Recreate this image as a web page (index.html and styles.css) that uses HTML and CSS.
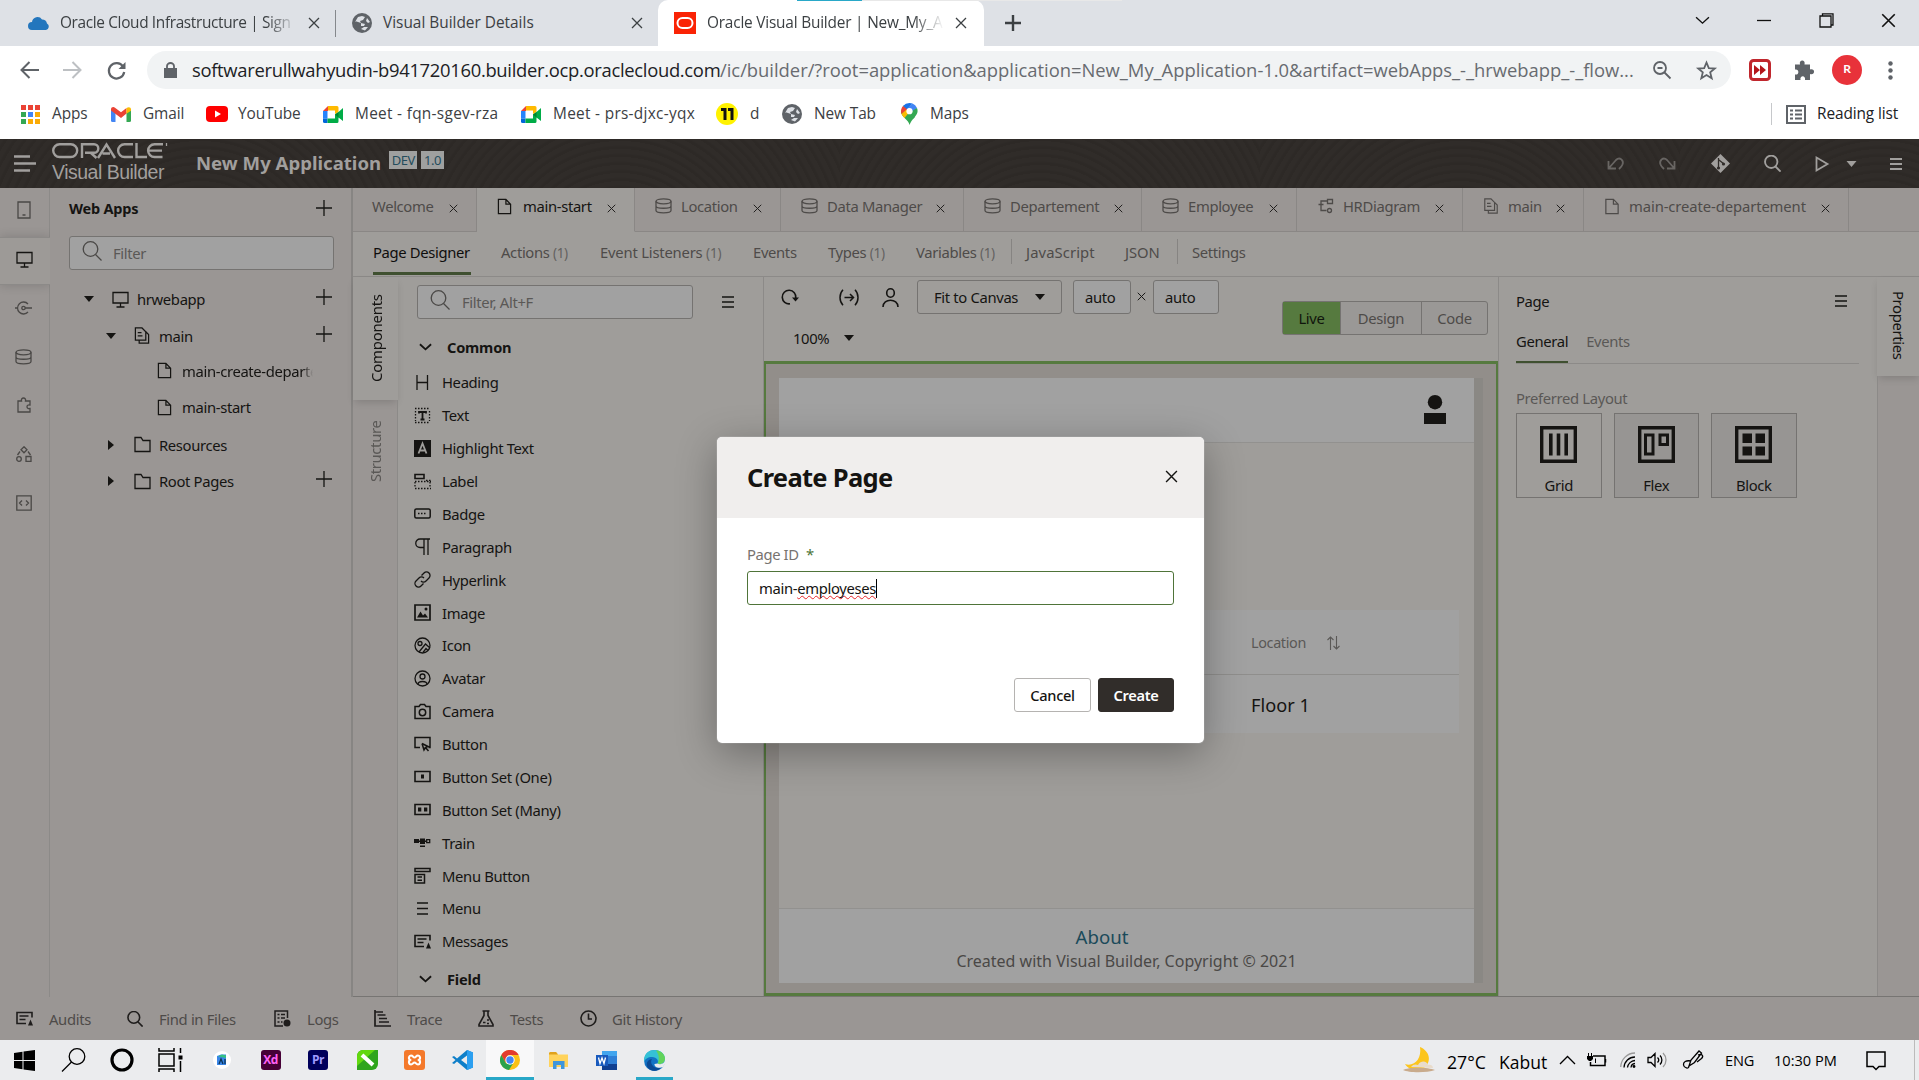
FILE: index.html
```html
<!DOCTYPE html>
<html lang="en">
<head>
<meta charset="utf-8">
<title>Oracle Visual Builder | New_My_Application</title>
<link rel="stylesheet" href="styles.css">
</head>
<body>
<svg class="sprite" xmlns="http://www.w3.org/2000/svg">
  <symbol id="x" viewBox="0 0 12 12"><path d="M1 1l10 10M11 1L1 11"/></symbol>
  <symbol id="plus" viewBox="0 0 16 16"><path d="M8 0v16M0 8h16"/></symbol>
  <symbol id="tri" viewBox="0 0 10 6"><path d="M0 0h10L5 6z" fill="currentColor" stroke="none"/></symbol>
  <symbol id="trir" viewBox="0 0 6 10"><path d="M0 0v10l6-5z" fill="currentColor" stroke="none"/></symbol>
  <symbol id="chev" viewBox="0 0 14 8"><path d="M1 1l6 5.5L13 1"/></symbol>
  <symbol id="mag" viewBox="0 0 20 20"><circle cx="8.5" cy="8" r="7.3"/><path d="M13.5 13.5l6 6"/></symbol>
  <symbol id="ham" viewBox="0 0 12 12"><path d="M0 1h12M0 6h12M0 11h12"/></symbol>
  <symbol id="globe" viewBox="0 0 20 20"><circle cx="10" cy="10" r="10" fill="#5f6368" stroke="none"/><path d="M3 9l3-5 4-1 3 1-2 3-3 1 1 2 4 1-1 2-3 0 0-3-6-2zM15 5l3 4-2 1-2-2zM9 16l3-2 4 0-3 3.500z" fill="#dee1e6" stroke="none"/></symbol>
  <symbol id="file" viewBox="0 0 16 18"><path d="M1.500 1.500h8l5 5v10h-13zM9.500 1.500v5h5"/></symbol>
  <symbol id="files" viewBox="0 0 16 18"><path d="M1 1h7l4 4v9H1zM12 5l3 3v9H5v-3M3.500 6h4M3.500 9.500h5"/></symbol>
  <symbol id="folder" viewBox="0 0 17 17"><path d="M1 1.500h6l2 3h7V15.500H1z"/></symbol>
  <symbol id="db" viewBox="0 0 17 16"><ellipse cx="8.500" cy="3.300" rx="7.500" ry="2.500"/><path d="M1 3.300v9.300c0 3 15 3 15 0V3.300M1 8c0 3 15 3 15 0"/></symbol>
  <symbol id="mon" viewBox="0 0 17 17"><path d="M1 1.500h15v10.500H1zM8.500 12v3.500M4.500 16h8"/></symbol>
  <symbol id="diag" viewBox="0 0 16 16"><path d="M10 1.500h5v4h-5zM10 3H3.500v9.500H9M1 6.500h5"/><circle cx="12" cy="12.500" r="2"/></symbol>
  <symbol id="phone" viewBox="0 0 14 18"><path d="M1 1h12v16H1zM5.500 14h3"/></symbol>
  <symbol id="svc" viewBox="0 0 17 14"><circle cx="8.500" cy="7" r="1.700"/><path d="M13 3a6 6 0 1 0 0 8M10 7h7M0 7h2.500"/></symbol>
  <symbol id="puz" viewBox="0 0 14 16"><path d="M1 4h3.500c-1-4 5-4 4 0H13v4c-4-1-4 4.500 0 3.500V15H1z"/></symbol>
  <symbol id="proc" viewBox="0 0 16 16"><path d="M8 0.800l3 3-3 3-3-3zM10 10.500h5v5h-5zM4 5.500L1.500 9M12 5.500L14.500 9"/><circle cx="3" cy="13" r="2.300"/></symbol>
  <symbol id="code" viewBox="0 0 16 16"><path d="M.8.800h14.400v14.400H.8zM6 5.500L3.500 8 6 10.500M10 5.500L12.500 8 10 10.500"/></symbol>
  <symbol id="cloud" viewBox="0 0 22 14"><path d="M4 14a4 4 0 0 1 0-8 5.500 5.500 0 0 1 10-2.500A5 5 0 0 1 19 7.500 3.500 3.500 0 0 1 18 14z" fill="#2376bd" stroke="none"/></symbol>
  <symbol id="meet" viewBox="0 0 20 17"><g stroke="none"><path d="M5 0v5H0z" fill="#ea4335"/><path d="M5 0h9a1.500 1.500 0 0 1 1.500 1.500V6L12 8V4.500H5z" fill="#ffba00"/><path d="M0 5h4.500v7.500H0z" fill="#2684fc"/><path d="M0 12.500h4.500V17H1.500A1.500 1.500 0 0 1 0 15.500z" fill="#0066da"/><path d="M4.500 12.500H12V8.500L15.500 6 20 2v13l-4.500-3.500v4A1.500 1.500 0 0 1 14 17H4.500z" fill="#00ac47"/><path d="M12 8.500L15.500 6v5.500z" fill="#00832d"/></g></symbol>
  <symbol id="msg" viewBox="0 0 17 14"><path d="M16 6V1H1v11h9M3.500 4.500h9M3.500 8h6"/><path d="M14.500 8l2.500 6h-5z" fill="currentColor" stroke="none"/></symbol>
</svg>

<header class="chrome">
  <div class="tabstrip">
    <div class="btab t1"><svg class="i" width="22" height="14"><use href="#cloud"/></svg><span class="fade">Oracle Cloud Infrastructure | Sign</span><svg class="i bx" width="12" height="12"><use href="#x"/></svg></div>
    <div class="btab t2"><svg class="i" width="20" height="20"><use href="#globe"/></svg><span>Visual Builder Details</span><svg class="i bx" width="12" height="12"><use href="#x"/></svg></div>
    <div class="btab t3"><svg class="i" width="22" height="22" viewBox="0 0 22 22"><path d="M0 0h22v22H0z" fill="#fa2305" stroke="none"/><rect x="3.500" y="6" width="15" height="10" rx="5" stroke="#fff" stroke-width="2"/></svg><span class="fade f3">Oracle Visual Builder | New_My_A</span><svg class="i bx" width="12" height="12"><use href="#x"/></svg></div>
    <svg class="i newtab" width="16" height="16"><use href="#plus"/></svg>
    <div class="win">
      <svg class="i" width="15" height="9" viewBox="0 0 14 8"><use href="#chev"/></svg>
      <svg class="i" width="14" height="14" viewBox="0 0 14 14"><path d="M0 7.500h14"/></svg>
      <svg class="i" width="15" height="15" viewBox="0 0 15 15"><path d="M1 3h11v11H1zM3.500 3V.8H14V12h-2"/></svg>
      <svg class="i" width="15" height="15"><use href="#x"/></svg>
    </div>
    <div class="loader"></div>
  </div>
  <div class="toolbar">
    <svg class="i" width="19" height="18" viewBox="0 0 19 18"><path d="M19 9H2M9.500 1L1.500 9l8 8" stroke="#5f6368" stroke-width="2"/></svg>
    <svg class="i" width="19" height="18" viewBox="0 0 19 18"><path d="M0 9h17M9.500 1l8 8-8 8" stroke="#bdc0c3" stroke-width="2"/></svg>
    <svg class="i" width="19" height="19" viewBox="0 0 19 19"><path d="M16 5.500A7.700 7.700 0 1 0 17.200 11" stroke="#5f6368" stroke-width="2.200"/><path d="M18.500 1v7h-7z" fill="#5f6368" stroke="none"/></svg>
    <div class="omni">
      <svg class="i" width="13" height="16" viewBox="0 0 13 16"><path d="M0 6h13v10H0z" fill="#5f6368" stroke="none"/><path d="M3 6V4a3.500 3 0 0 1 7 0v2" stroke="#5f6368" stroke-width="1.800"/></svg>
      <span class="url"><b>softwarerullwahyudin-b941720160.builder.ocp.oraclecloud.com</b><i>/ic/builder/?root=application&amp;application=New_My_Application-1.0&amp;artifact=webApps_-_hrwebapp_-_flow...</i></span>
      <svg class="i" width="18" height="18" viewBox="0 0 18 18"><g stroke="#5f6368" stroke-width="1.800"><circle cx="7" cy="7" r="6"/><path d="M11.500 11.500l6 6M4.500 7h5"/></g></svg>
      <svg class="i star" width="19" height="19" viewBox="0 0 19 19"><path d="M9.500 1.500l2.300 5.600 6 .4-4.600 3.900 1.500 5.900-5.200-3.200-5.200 3.200 1.500-5.900L1.200 7.500l6-.4z" stroke="#5f6368" stroke-width="1.800"/></svg>
    </div>
    <svg class="i" width="22" height="22" viewBox="0 0 22 22"><rect x="1.500" y="1.500" width="19" height="19" rx="3" fill="#fff" stroke="#c0272d" stroke-width="3"/><path d="M5 6l6 5-6 5zM11 6l6 5-6 5z" fill="#b3161b" stroke="none"/></svg>
    <svg class="i" width="20" height="20" viewBox="0 0 20 20"><path d="M1 4.500h5c-1.500-5.500 6-5.500 4.500 0H16v5c5.500-1.500 5.500 6 0 4.500V20h-5c1-5-5.500-5-4.500 0H1v-5.500c4.500 1 4.500-6 0-5z" fill="#5f6368" stroke="none"/></svg>
    <div class="me">R</div>
    <svg class="i" width="5" height="19" viewBox="0 0 5 19"><g fill="#5f6368" stroke="none"><circle cx="2.500" cy="2.500" r="2.200"/><circle cx="2.500" cy="9.500" r="2.200"/><circle cx="2.500" cy="16.500" r="2.200"/></g></svg>
  </div>
  <div class="marks">
    <div><svg class="i" width="19" height="19" viewBox="0 0 19 19"><g stroke="none"><path d="M0 0h5v5H0zM7 0h5v5H7zM14 0h5v5h-5z" fill="#ea4335"/><path d="M0 7h5v5H0zM0 14h5v5H0z" fill="#34a853"/><path d="M7 7h5v5H7z" fill="#4285f4"/><path d="M14 7h5v5h-5zM7 14h5v5H7zM14 14h5v5h-5z" fill="#fbab05"/></g></svg>Apps</div>
    <div><svg class="i" width="20" height="15" viewBox="0 0 20 15"><g stroke="none"><path d="M0 2l4.500 3.500V15H1.500A1.500 1.500 0 0 1 0 13.500z" fill="#4285f4"/><path d="M20 2l-4.500 3.500V15h3a1.500 1.500 0 0 0 1.500-1.500z" fill="#34a853"/><path d="M0 2.500C0 0 2.500-.5 4 .7l6 4.600 5.500-4.200v5.400L10 11 0 3.500z" fill="#ea4335"/><path d="M15.500 1.100C17.500-.6 20 0 20 2.500v1.200l-4.500 3z" fill="#fbbc04"/></g></svg>Gmail</div>
    <div><svg class="i" width="22" height="16" viewBox="0 0 22 16"><rect width="22" height="16" rx="4" fill="#f00" stroke="none"/><path d="M9 4.500v7l6-3.500z" fill="#fff" stroke="none"/></svg>YouTube</div>
    <div><svg class="i" width="20" height="17"><use href="#meet"/></svg>Meet - fqn-sgev-rza</div>
    <div><svg class="i" width="20" height="17"><use href="#meet"/></svg>Meet - prs-djxc-yqx</div>
    <div><svg class="i" width="22" height="22" viewBox="0 0 22 22"><circle cx="11" cy="11" r="11" fill="#fff200" stroke="none"/><path d="M5 6.500h4V17M12 6.500h4V17" stroke="#111" stroke-width="3"/></svg>d</div>
    <div><svg class="i" width="20" height="20"><use href="#globe"/></svg>New Tab</div>
    <div><svg class="i" width="17" height="22" viewBox="0 0 17 22"><g stroke="none"><path d="M8.500 22C8 17 0 14 0 8.500L3 2l11 12c-3 3-4.500 5-5.500 8z" fill="#34a853"/><path d="M8.500 0A8.500 8.500 0 0 0 2 3l4 4 5.500-6.500z" fill="#1a73e8"/><path d="M2 3A8.500 8.500 0 0 0 .5 11L7 7z" fill="#ea4335"/><path d="M.5 11c.6 1.500 2 3 3 4l7-8.500L5 7z" fill="#fbbc04"/><path d="M11.500.5A8.500 8.500 0 0 1 16 5l-5 6-4-6z" fill="#4285f4"/><path d="M16 5c2 5-1.500 8-4 11l-4-4 3-4z" fill="#34a853"/><circle cx="8.500" cy="8.200" r="3.100" fill="#fff"/></g></svg>Maps</div>
    <div class="reading"><svg class="i" width="20" height="19" viewBox="0 0 20 19"><path d="M1 1h18v17H1zM4 5.500h3M4 9.500h3M4 13.500h3M9 5.500h7M9 9.500h7M9 13.500h7" stroke="#5f6368" stroke-width="2"/></svg>Reading list</div>
  </div>
</header>

<div class="app">
  <header class="apphead">
    <svg class="i menu" width="22" height="17" viewBox="0 0 22 17"><path d="M0 1.500h16M0 8.500h22M0 15.500h16" stroke-width="2.400"/></svg>
    <div class="brand">
      <svg class="i" width="116" height="17" viewBox="0 0 116 17"><title>ORACLE</title><g stroke-width="2.400"><rect x="1.200" y="2.200" width="24" height="12.800" rx="6.400"/><path d="M30 16V2.200h12a4.300 4.300 0 0 1 0 8.600h-9M39 11l5.500 5M46 16l8.500-13.500L63 16M50.500 11.500H58M81 2.200h-8.500a6.400 6.400 0 0 0 0 12.800H81M84.500 1v14H95M111 2.200h-8.500a6.400 6.400 0 0 0 0 12.800h8M96.500 8.600H110"/></g><path d="M114.500 1v3"/></svg>
      <div>Visual Builder</div>
    </div>
    <h1>New My Application</h1><span class="tag">DEV</span><span class="tag">1.0</span>
    <div class="headtools">
      <svg class="i dim" width="17" height="13" viewBox="0 0 17 13"><path d="M1.500 4v7.500h7.500M2 11L9 3c4-4 8 1 6.500 4.500C15 9 13 11 12 12" stroke-width="1.800"/></svg>
      <svg class="i dim" width="17" height="13" viewBox="0 0 17 13"><path d="M15.500 4v7.500H8M15 11L8 3C4-1 0 4 1.500 7.500 2 9 4 11 5 12" stroke-width="1.800"/></svg>
      <svg class="i" width="19" height="19" viewBox="0 0 19 19"><path d="M9.500 0l9.500 9.500-9.500 9.500L0 9.500z" fill="currentColor" stroke="none"/><path d="M7.500 4v11M8 6l5 4" stroke="#302c29"/><circle cx="7.500" cy="14" r="1.600" fill="#302c29" stroke="none"/><circle cx="12.500" cy="10" r="1.600" fill="#302c29" stroke="none"/></svg>
      <svg class="i" width="17" height="17" viewBox="0 0 20 20" stroke-width="2.200"><use href="#mag"/></svg>
      <svg class="i" width="14" height="16" viewBox="0 0 14 16"><path d="M1.500 1.500v13L12.500 8z" stroke-width="1.800"/></svg>
      <svg class="i" width="11" height="6"><use href="#tri"/></svg>
      <svg class="i" width="12" height="12" stroke-width="1.800"><use href="#ham"/></svg>
    </div>
  </header>

  <div class="body">
    <nav class="rail">
      <div><svg class="i" width="14" height="18"><use href="#phone"/></svg></div>
      <div class="on"><svg class="i" width="17" height="17"><use href="#mon"/></svg></div>
      <div><svg class="i" width="17" height="14"><use href="#svc"/></svg></div>
      <div><svg class="i" width="17" height="16"><use href="#db"/></svg></div>
      <div><svg class="i" width="14" height="16"><use href="#puz"/></svg></div>
      <div><svg class="i" width="16" height="16"><use href="#proc"/></svg></div>
      <div><svg class="i" width="16" height="16"><use href="#code"/></svg></div>
    </nav>

    <aside class="nav">
      <div class="navhead"><b>Web Apps</b><svg class="i" width="16" height="16"><use href="#plus"/></svg></div>
      <div class="search"><svg class="i" width="20" height="20"><use href="#mag"/></svg>Filter</div>
      <div class="tree">
        <div class="row r0"><svg class="i c" width="10" height="6"><use href="#tri"/></svg><svg class="i ic" width="17" height="17"><use href="#mon"/></svg><span>hrwebapp</span><svg class="i p" width="16" height="16"><use href="#plus"/></svg></div>
        <div class="row r1"><svg class="i c" width="10" height="6"><use href="#tri"/></svg><svg class="i ic" width="16" height="17"><use href="#files"/></svg><span>main</span><svg class="i p" width="16" height="16"><use href="#plus"/></svg></div>
        <div class="row r2"><svg class="i ic" width="15" height="17"><use href="#file"/></svg><span class="cut">main-create-departement</span></div>
        <div class="row r2"><svg class="i ic" width="15" height="17"><use href="#file"/></svg><span>main-start</span></div>
        <div class="row r1"><svg class="i c" width="6" height="10"><use href="#trir"/></svg><svg class="i ic" width="17" height="17"><use href="#folder"/></svg><span>Resources</span></div>
        <div class="row r1"><svg class="i c" width="6" height="10"><use href="#trir"/></svg><svg class="i ic" width="17" height="17"><use href="#folder"/></svg><span>Root Pages</span><svg class="i p" width="16" height="16"><use href="#plus"/></svg></div>
      </div>
    </aside>

    <main class="work">
      <div class="tabs">
        <div><span>Welcome</span><svg class="i" width="9" height="9"><use href="#x"/></svg></div>
        <div class="on"><svg class="i" width="15" height="17"><use href="#file"/></svg><span>main-start</span><svg class="i" width="9" height="9"><use href="#x"/></svg></div>
        <div><svg class="i" width="17" height="16"><use href="#db"/></svg><span>Location</span><svg class="i" width="9" height="9"><use href="#x"/></svg></div>
        <div><svg class="i" width="17" height="16"><use href="#db"/></svg><span>Data Manager</span><svg class="i" width="9" height="9"><use href="#x"/></svg></div>
        <div><svg class="i" width="17" height="16"><use href="#db"/></svg><span>Departement</span><svg class="i" width="9" height="9"><use href="#x"/></svg></div>
        <div><svg class="i" width="17" height="16"><use href="#db"/></svg><span>Employee</span><svg class="i" width="9" height="9"><use href="#x"/></svg></div>
        <div><svg class="i" width="17" height="16"><use href="#diag"/></svg><span>HRDiagram</span><svg class="i" width="9" height="9"><use href="#x"/></svg></div>
        <div><svg class="i" width="16" height="16"><use href="#files"/></svg><span>main</span><svg class="i" width="9" height="9"><use href="#x"/></svg></div>
        <div class="wide"><svg class="i" width="16" height="17"><use href="#file"/></svg><span>main-create-departement</span><svg class="i" width="9" height="9"><use href="#x"/></svg></div>
        <div class="rest"></div>
      </div>
      <div class="subtabs">
        <span class="on">Page Designer</span><span>Actions <small>(1)</small></span><span>Event Listeners <small>(1)</small></span><span>Events</span><span>Types <small>(1)</small></span><span>Variables <small>(1)</small></span><span class="sep">JavaScript</span><span>JSON</span><span class="sep">Settings</span>
      </div>
      <div class="designer">
        <div class="side"><div class="on">Components</div><div>Structure</div></div>
        <section class="palette">
          <div class="pfilter"><div class="search"><svg class="i" width="20" height="20"><use href="#mag"/></svg>Filter, Alt+F</div><svg class="i" width="12" height="12"><use href="#ham"/></svg></div>
          <h3><svg class="i" width="13" height="8" stroke-width="2"><use href="#chev"/></svg>Common</h3>
          <ul>
            <li><svg class="i" width="17" height="17" viewBox="0 0 17 17"><path d="M3 1v15M13.500 1v15M3 8.500h10.500"/></svg>Heading</li>
            <li><svg class="i" width="17" height="17" viewBox="0 0 17 17"><path d="M1 1.500h15M1 15.500h15M1.500 4v10M15.500 4v10" stroke-dasharray="1.500 1.500"/><path d="M5 6.500V5h7v1.500M8.500 5v7.500M6.500 12.500h4" stroke-width="1.800"/></svg>Text</li>
            <li><svg class="i" width="17" height="17" viewBox="0 0 17 17"><path d="M0 0h17v17H0z" fill="currentColor" stroke="none"/><path d="M4.500 13.500l4-10 4 10M6 10.500h5" stroke="#9f9d9a" stroke-width="1.800"/></svg>Highlight Text</li>
            <li><svg class="i" width="17" height="17" viewBox="0 0 17 17"><path d="M1 1.500h9v4H1z" stroke-width="1.600"/><path d="M12 7.500h5M1 8.500h16M1 15.500h16M1 9v6M16 9v6" stroke-dasharray="1.500 1.500"/></svg>Label</li>
            <li><svg class="i" width="17" height="17" viewBox="0 0 17 17"><rect x=".8" y="4" width="15.400" height="9" rx="1.500" stroke-width="1.500"/><path d="M4 8.500h9" stroke-dasharray="1.500 1.500"/></svg>Badge</li>
            <li><svg class="i" width="17" height="17" viewBox="0 0 17 17"><path d="M16 1H6a4 4 0 0 0 0 8.500h4V17M10 1v8M14 1v16"/></svg>Paragraph</li>
            <li><svg class="i" width="17" height="17" viewBox="0 0 17 17"><path d="M7.500 4.500l2.500-2.500a3.500 3.500 0 0 1 5 5l-3 3a3.500 3.500 0 0 1-5 0M9.500 12.500L7 15a3.500 3.500 0 0 1-5-5l3-3a3.500 3.500 0 0 1 5 0"/></svg>Hyperlink</li>
            <li><svg class="i" width="17" height="17" viewBox="0 0 17 17"><path d="M1 1h15v15H1z" stroke-width="1.700"/><path d="M3 13.500l3.500-6 2.500 4 2-2 3 4z" fill="currentColor" stroke="none"/><circle cx="12" cy="5" r="1.500" fill="currentColor" stroke="none"/></svg>Image</li>
            <li><svg class="i" width="17" height="17" viewBox="0 0 17 17"><circle cx="8.500" cy="8.500" r="7.500"/><circle cx="6" cy="6.500" r="2"/><path d="M5 15l6.500-8 4.500 4M9 15.500l3-4 2 2"/></svg>Icon</li>
            <li><svg class="i" width="17" height="17" viewBox="0 0 17 17"><circle cx="8.500" cy="8.500" r="7.500"/><circle cx="8.500" cy="6.500" r="2.500"/><path d="M4 14.500c0-4 9-4 9 0"/></svg>Avatar</li>
            <li><svg class="i" width="17" height="17" viewBox="0 0 17 17"><path d="M1 3.500h4l1.500-2h4l1.500 2h4v12H1z" stroke-width="1.500"/><circle cx="8.500" cy="9.500" r="3.200" stroke-width="1.500"/></svg>Camera</li>
            <li><svg class="i" width="17" height="17" viewBox="0 0 17 17"><path d="M6 11.500H1v-10h15v10h-1.500M8 7.500l6 3-2.500 1 3 3.500M8 7.500l2 6.500 1.500-2.500" stroke-width="1.500"/></svg>Button</li>
            <li><svg class="i" width="17" height="17" viewBox="0 0 17 17"><path d="M1 3.500h15v10H1z" stroke-width="1.600"/><path d="M7 6.500h3v4H7z" fill="currentColor" stroke="none"/></svg>Button Set (One)</li>
            <li><svg class="i" width="17" height="17" viewBox="0 0 17 17"><path d="M1 3.500h15v10H1z" stroke-width="1.600"/><path d="M4 6.500h3.300v4H4zM10 6.500h3.300v4H10z" fill="currentColor" stroke="none"/></svg>Button Set (Many)</li>
            <li><svg class="i" width="17" height="17" viewBox="0 0 17 17"><path d="M0 5h5v4H0zM6 4.500h5V10H6zM4 6.500h8v1.500H4zM6 11.500h5V13H6z" fill="currentColor" stroke="none"/><path d="M12.700 5.700h3v3h-3z"/></svg>Train</li>
            <li><svg class="i" width="17" height="17" viewBox="0 0 17 17"><path d="M1 1.500h15v3H1zM1 7.500h9.500v8.500H1zM3.500 10h4.500M3.500 13.300h4.500" stroke-width="1.500"/></svg>Menu Button</li>
            <li><svg class="i" width="17" height="17" viewBox="0 0 17 17"><path d="M3 3h11M3 8.500h11M3 14h11"/></svg>Menu</li>
            <li><svg class="i" width="17" height="15" stroke-width="1.600"><use href="#msg"/></svg>Messages</li>
          </ul>
          <h3 class="h2"><svg class="i" width="13" height="8" stroke-width="2"><use href="#chev"/></svg>Field</h3>
        </section>

        <section class="stage">
          <div class="stagebar">
            <div class="tools">
              <svg class="i s1" width="18" height="16" viewBox="0 0 18 16"><path d="M9 14.800A6.800 6.800 0 1 1 14.800 9" stroke-width="1.600"/><path d="M11 8.500h7l-3.500 4z" fill="currentColor" stroke="none"/></svg>
              <svg class="i s2" width="20" height="17" viewBox="0 0 20 17"><path d="M4 .8c-4 4-4 11.400 0 15.400M16 .8c4 4 4 11.400 0 15.400M5.500 8.500H14M11 5l3.500 3.500L11 12" stroke-width="1.500"/></svg>
              <svg class="i s3" width="17" height="19" viewBox="0 0 17 19"><ellipse cx="8.500" cy="5" rx="3.800" ry="4.200" stroke-width="1.600"/><path d="M1 19c0-9 15-9 15 0" stroke-width="1.600"/></svg>
              <div class="fit">Fit to Canvas<svg class="i" width="10" height="6"><use href="#tri"/></svg></div>
              <div class="dim1">auto</div><svg class="i s4" width="9" height="9"><use href="#x"/></svg><div class="dim1 d2">auto</div>
              <div class="zoomlv">100%<svg class="i" width="10" height="6"><use href="#tri"/></svg></div>
            </div>
            <div class="modes"><span class="on">Live</span><span>Design</span><span>Code</span></div>
          </div>
          <div class="canvas">
            <div class="page">
              <div class="phead"><svg width="22" height="29" viewBox="0 0 22 29"><ellipse cx="11" cy="7.200" rx="7.200" ry="7.200" fill="#151412"/><path d="M0 18h22v11H0z" fill="#151412"/></svg></div>
              <div class="pbody">
                <div class="table">
                  <div class="th">Location<svg class="i" width="13" height="14" viewBox="0 0 13 14"><path d="M3.500 14V1M.5 4l3-3 3 3M9.500 0v13M6.500 10l3 3 3-3" stroke-width="1.100"/></svg></div>
                  <div class="td">Floor 1</div>
                </div>
              </div>
              <div class="pfoot"><a>About</a><p>Created with Visual Builder, Copyright © 2021</p></div>
            </div>
            <div class="pscroll"></div>
          </div>
        </section>

        <section class="props">
          <div class="prhead">Page<svg class="i" width="12" height="12"><use href="#ham"/></svg></div>
          <div class="prtabs"><span class="on">General</span><span>Events</span></div>
          <div class="prlabel">Preferred Layout</div>
          <div class="cards">
            <div class="on"><svg class="i" width="37" height="37" viewBox="0 0 37 37"><path d="M1.700 1.700h33.600v33.600H1.700z" stroke-width="3.400"/><path d="M10.800 7.500v22M18.500 7.500v22M26.200 7.500v22" stroke-width="3.600"/></svg>Grid</div>
            <div><svg class="i" width="37" height="37" viewBox="0 0 37 37"><path d="M1.700 1.700h33.600v33.600H1.700z" stroke-width="3.400"/><path d="M7.500 9h7.500v19H7.500zM22 9h7.500v9.500H22z" stroke-width="3"/></svg>Flex</div>
            <div><svg class="i" width="37" height="37" viewBox="0 0 37 37"><path d="M1.700 1.700h33.600v33.600H1.700z" stroke-width="3.400"/><path d="M7.500 7.500h9.500v9.500H7.500zM20.500 7.500H30v9.500h-9.500zM7.500 20.500h9.500V29.500H7.500zM20.500 20.500H30V29.500h-9.500z" fill="currentColor" stroke="none"/></svg>Block</div>
          </div>
        </section>
        <div class="side right"><div class="on">Properties</div><div></div></div>
      </div>
    </main>
  </div>

  <footer class="status">
    <div><svg class="i" width="17" height="15" stroke-width="1.600"><use href="#msg"/></svg>Audits</div>
    <div><svg class="i" width="16" height="16" viewBox="0 0 20 20" stroke-width="2"><use href="#mag"/></svg>Find in Files</div>
    <div><svg class="i" width="17" height="17" viewBox="0 0 17 17"><path d="M9 16H1V1h12.500v7M3.500 4.500h2M7 4.500h4M3.500 8h2M7 8h4M3.500 12h2M7 12h1.500" stroke-width="1.500"/><circle cx="13" cy="13" r="3.500" fill="currentColor" stroke="none"/></svg>Logs</div>
    <div><svg class="i" width="17" height="17" viewBox="0 0 17 17"><path d="M1 0v16h16M1 2h8M3.500 5h8M5 8.500h8M5 12h10" stroke-width="1.700"/></svg>Trace</div>
    <div><svg class="i" width="16" height="17" viewBox="0 0 16 17"><path d="M4.500 1h7M6 1v4.500L1 14.500V16h14v-1.500L10 5.500V1M5 12.500h2.500M9 10h2M9 13.500h2" stroke-width="1.600"/></svg>Tests</div>
    <div><svg class="i" width="17" height="17" viewBox="0 0 17 17"><circle cx="8.500" cy="8.500" r="7.500" stroke-width="1.600"/><path d="M8.500 3.500v5.500H12" stroke-width="1.600"/></svg>Git History</div>
  </footer>
</div>

<footer class="taskbar">
  <div class="tb"><svg width="21" height="21" viewBox="0 0 21 21"><path d="M0 3l8.500-1.200V10H0zM9.500 1.600L21 0v10H9.500zM0 11h8.500v8.200L0 18zM9.500 11H21v10L9.500 19.400z"/></svg></div>
  <div class="tb"><svg class="i" width="25" height="24" viewBox="0 0 25 24"><circle cx="16" cy="8.500" r="7.800"/><path d="M10.500 14L1 23.500"/></svg></div>
  <div class="tb"><svg class="i" width="24" height="24" viewBox="0 0 24 24"><circle cx="12" cy="12" r="10" stroke-width="3.200"/></svg></div>
  <div class="tb"><svg class="i" width="25" height="24" viewBox="0 0 25 24"><path d="M1 0v3h15V0M1 6h15v12H1zM1 24v-3h15v3M22.500 0v5M22.500 13v11" stroke-width="1.500"/><path d="M20.500 7.500h4v4h-4z" fill="currentColor" stroke="none"/></svg></div>
  <div class="tb"><svg width="18" height="18" viewBox="0 0 18 18"><circle cx="9" cy="9" r="9" fill="#fff"/><path d="M4 5l4-1.500h5V14H4z" fill="#3a86e8"/><path d="M5 5.500L9 3.500l4 1V7z" fill="#35c280"/><path d="M6 13l2-5 2 5M12 8v5" stroke="#0b3558" fill="none" stroke-width="1.300"/></svg></div>
  <div class="tb"><span class="adobe xd">Xd</span></div>
  <div class="tb"><span class="adobe pr">Pr</span></div>
  <div class="tb"><svg width="21" height="20" viewBox="0 0 21 20"><path d="M6 0h15v14a6 6 0 0 1-6 6H0V6a6 6 0 0 1 6-6z" fill="#2fa51c"/><path d="M6 0h12L0 16V6a6 6 0 0 1 6-6z" fill="#62d80f"/><path d="M5 5l11 10" stroke="#fff" stroke-width="4"/></svg></div>
  <div class="tb"><svg width="21" height="20" viewBox="0 0 21 20"><rect width="21" height="20" rx="3" fill="#f4792b"/><path d="M7 5.500c2 0 2 2 3.500 2s1.500-2 3.500-2 3 3 1 4.500c2 1.500 1 4.500-1 4.500s-2-2-3.500-2-1.500 2-3.500 2-3-3-1-4.500c-2-1.500-1-4.500 1-4.500z" fill="none" stroke="#fff" stroke-width="2.200"/></svg></div>
  <div class="tb"><svg width="21" height="20" viewBox="0 0 21 20"><path d="M15 0l6 2.500v15L15 20 5 11.500 2 14 0 13l3.500-3L0 7l2-1 3 2.500zM15 5.500L9 10l6 4.500z" fill="#0e7fc9" fill-rule="evenodd"/><path d="M15 0l6 2.500v15L15 20z" fill="#2b9ff0"/></svg></div>
  <div class="tb act"><svg width="20" height="20" viewBox="0 0 20 20"><circle cx="10" cy="10" r="10" fill="#fbc116"/><path d="M1.300 5A10 10 0 0 1 18.700 5H10a5 5 0 0 0-4.500 3z" fill="#e33b2e"/><path d="M1.300 5l4.200 7.500L8 6z" fill="#e33b2e"/><path d="M1.300 5a10 10 0 0 0 7.700 15l4-6.500-7 0z" fill="#2ba24c"/><circle cx="10" cy="10" r="4.700" fill="#fff"/><circle cx="10" cy="10" r="3.700" fill="#4285f4"/></svg></div>
  <div class="tb"><svg width="19" height="17" viewBox="0 0 19 17"><path d="M0 1.500A1.500 1.500 0 0 1 1.500 0H7l2 2.500h10V15H0z" fill="#ffd35c"/><path d="M0 1.500A1.500 1.500 0 0 1 1.500 0H7l2 2.500H0z" fill="#e0a21c"/><path d="M4 9h11.500v8h-3.500v-4H7.500v4H4z" fill="#3e96dc"/></svg></div>
  <div class="tb"><svg width="21" height="19" viewBox="0 0 21 19"><path d="M6 0h15v19H6z" fill="#2f7fd6"/><path d="M6 0h15v5H6z" fill="#41a5ee"/><path d="M6 13h15v6H6z" fill="#103f91"/><path d="M0 4h12v11H0z" fill="#185abd"/><path d="M2.500 6.500l1.500 6L6 7l2 5.500 1.500-6" stroke="#fff" stroke-width="1.300" fill="none"/></svg></div>
  <div class="tb run"><svg width="21" height="21" viewBox="0 0 21 21"><circle cx="10.500" cy="10.500" r="10.500" fill="#1272c4"/><path d="M0 9C1 3 5 0 10.500 0 17 0 21 4 21 9s-5 6-7.500 4.500C15 11 13 7 8 7c-4 0-7 2-8 5z" fill="#35c1d6"/><path d="M12 .2C18 1 21 5 21 9s-5 6-7.500 4.500C15 11 16 6 12 .2z" fill="#62d35a"/><path d="M8 9c-3 4 2 11 9 8.500-3 4-9 4.500-12.500 1S3 9.500 8 9z" fill="#0c4a94"/><path d="M13.500 13.500C16 15 21 14 21 9.500L21 14l-2 3c-4 2-9 0-8.500-3z" fill="#ebecee"/></svg></div>
  <div class="tray">
    <svg class="moon" width="32" height="26" viewBox="0 0 32 26"><path d="M17 0c10 4 12 15 4 21-6 4-16 2-19-4 9 3 17-5 15-17z" fill="#fcc51d"/><path d="M8 20c2-3 5-3 7-2 3-5 9-4 10 0 3-1 5 1 5 3z" fill="#e9dccb"/><path d="M0 23c5-3 25-3 32 0-8 3-26 3-32 0z" fill="#c9ab8c"/></svg>
    <span class="temp">27°C</span><span class="cond">Kabut</span>
    <svg class="i" width="17" height="10" viewBox="0 0 17 10"><path d="M1 9l7.500-7.500L16 9" stroke-width="1.300"/></svg>
    <svg class="i bat" width="20" height="14" viewBox="0 0 20 14"><path d="M6 3h12v9.500H3.500V9M18.500 6v3.500" stroke-width="1.500"/><path d="M0 3h6v3L4 8H2L0 6zM1 0h1v3H1zM4 0h1v3H4zM8 5.500h1V10H8z" fill="currentColor" stroke="none"/></svg>
    <svg class="i" width="16" height="16" viewBox="0 0 16 16"><path d="M0.700 15A14.500 14.500 0 0 1 15 1" stroke="#999"/><path d="M4 15.500A11 11 0 0 1 15 5M7.500 15.500A8 8 0 0 1 15 8.500M11 15.500a4.500 4.500 0 0 1 4-4"/><circle cx="14" cy="14.500" r="1.400" fill="currentColor" stroke="none"/></svg>
    <svg class="i vol" width="20" height="16" viewBox="0 0 20 16"><path d="M1 5.500h3l4-4v13l-4-4H1zM10.500 5.500c1.500 1.500 1.500 3.500 0 5M13 3.500c2.500 2.500 2.500 6.500 0 9"/><path d="M16 1c4 4 4 10 0 14" stroke="#999"/></svg>
    <svg class="i" width="21" height="20" viewBox="0 0 21 20"><path d="M6 16l2-6 8-9 2.500 2-7 9.500zM15 5c4-2 6 1 3.500 3.500L14 12M8 11c-5-1-8 1-7.500 4S6 19.500 6 16"/></svg>
    <span class="lang">ENG</span><span class="clock">10:30 PM</span>
    <svg class="i note" width="20" height="19" viewBox="0 0 20 19"><path d="M1 1h18v14.500h-6l-3 3-3-3H1z" stroke-width="1.500"/></svg>
  </div>
</footer>

<div class="dialog">
  <div class="dhead"><h2>Create Page</h2><svg class="i" width="13" height="13"><use href="#x"/></svg></div>
  <div class="dbody">
    <label>Page ID <em>*</em></label>
    <div class="field">main-<u>employeses</u><span class="caret"></span></div>
    <div class="btns"><button>Cancel</button><button class="pri">Create</button></div>
  </div>
</div>
</body>
</html>
```
FILE: styles.css
```css
*{box-sizing:border-box}
body{margin:0;width:1919px;height:1080px;overflow:hidden;display:flex;flex-direction:column;background:#9f9d9a;color:#151412;font:14.8px/20px "Noto Sans",sans-serif;letter-spacing:-.34px;white-space:nowrap}
.sprite{position:absolute;width:0;height:0}
.i{fill:none;stroke:currentColor;flex:none;overflow:visible}
svg:not([stroke-width]).i{stroke-width:1.3}
h1,h2,h3,p,ul{margin:0;padding:0}

/* browser */
.chrome{flex:0 0 139px;background:#fff;font-family:"Open Sans",sans-serif;font-size:15.4px;letter-spacing:-.1px;color:#3c4043}
.tabstrip{height:46px;background:#dee1e6;display:flex;align-items:center;position:relative}
.btab{display:flex;align-items:center;height:46px}
.btab .bx{margin-left:auto;stroke-width:2;color:#3c4043}
.t1{width:320px;padding-left:28px;gap:10px}
.t1 span{width:237px;letter-spacing:-.35px}
.t2{width:338px;padding:0 15px 0 32px;gap:11px;position:relative;letter-spacing:0}
.t2::before{content:"";width:1px;height:27px;background:#85888c;position:absolute;left:15px}
.t3{width:326px;padding:0 17px 0 16px;gap:11px;background:#fff;border-radius:10px 10px 0 0}
.fade{overflow:hidden;-webkit-mask-image:linear-gradient(90deg,#000 87%,transparent);mask-image:linear-gradient(90deg,#000 87%,transparent)}
.t3 span{width:240px;letter-spacing:-.2px}
.newtab{margin-left:21px;stroke-width:2.4!important}
.win{margin-left:auto;display:flex;width:224px;padding-right:23px;justify-content:space-between;align-items:center;margin-top:-6px;color:#111}
.win .i{stroke-width:1.2}
.loader{position:absolute;left:797px;top:0;width:325px;height:1px;background:linear-gradient(90deg,#29a8c8 65px,#e8e8e8 65px)}
.toolbar{height:48px;display:flex;align-items:center;padding:0 26px 0 20px}
.toolbar>.i:nth-child(2){margin-left:24px}
.toolbar>.i:nth-child(3){margin-left:25px;margin-right:21px}
.omni{width:1584px;height:38px;border-radius:19px;background:#f1f3f4;display:flex;align-items:center;padding-left:17px;margin-right:18px}
.url{width:1462px;margin-left:15px;font-size:18.4px;letter-spacing:-.15px}
.url b{font-weight:400;color:#202124;display:inline-block;width:528px;letter-spacing:-.3px}
.url i{font-style:normal;color:#686b70;letter-spacing:-.02px}
.star{margin-left:26px}
.omni .i:nth-child(3){margin-left:-1px}
.me{width:30px;height:30px;border-radius:50%;background:#e8323a;color:#fff;font:700 12px/28px Lato,sans-serif;text-align:center;margin-left:18px;margin-right:auto}
.toolbar>.i:nth-child(6){margin-left:23px}
.marks{height:40px;display:grid;grid-template-columns:90px 95px 117px 198px 195px 66px 119px 870px 1fr;padding-left:21px;align-items:center}
.marks div{display:flex;align-items:center;gap:12px}
.marks div:nth-child(3){gap:10px}
.marks div:nth-child(4),.marks div:nth-child(5){letter-spacing:.3px}
.marks .reading{border-left:1px solid #c6c8cb;height:22px;padding-left:14px;gap:11px;color:#202124}

/* application header */
.app{flex:0 0 901px;display:flex;flex-direction:column}
.apphead{flex:0 0 49px;background:repeating-radial-gradient(circle at 200px 130px,rgba(0,0,0,.07) 0 2px,transparent 4px 8px) 0 0/420px 160px,#302c29;color:#a19f9d;display:flex;align-items:center;padding-left:14px}
.menu{margin-right:16px;margin-top:-1px}
.brand{width:116px;margin-right:28px;font:20px/22px "Liberation Sans",sans-serif;margin-top:-2px}
.brand .i{display:block;margin-bottom:2px}
.brand div{font-size:19.500px;letter-spacing:-.5px}
h1{font:700 18.600px/26px "Noto Sans",sans-serif;letter-spacing:0;margin-right:8px;margin-top:-2px}
.tag{background:#9fa09f;color:#244c5c;font-size:13px;line-height:18px;padding:0 2.500px;margin-right:4px;margin-top:-7px;letter-spacing:-.4px}
.headtools{margin-left:auto;display:grid;grid-template-columns:52px 52px 53px 51px 31px 44px 29px;align-items:center;justify-items:start}
.dim{opacity:.5}

/* left rail and navigator */
.body{flex:0 0 809px;display:flex}
.rail{width:50px;background:#9a9694;border-right:1px solid #8c8a88;color:#4a4846}
.rail div{height:48.700px;display:flex;align-items:center;justify-content:center;padding:0 2px 3px 0}
.rail div:first-child{height:49px;padding-bottom:5px}
.rail .on{height:48px;border:solid #8c8a88;border-width:1px 0;background:#9d9a97;color:#151412;width:50px;box-shadow:0 0 10px rgba(0,0,0,.16);clip-path:inset(-12px 0 -12px 0);padding-bottom:4px}
.nav{width:303px;background:#9a9694;border-right:2px solid #878583;padding:9px 17px 0 19px}
.navhead{display:flex;justify-content:space-between;align-items:center;height:21px;padding-right:2px;margin-bottom:18px;letter-spacing:-.2px}
.navhead b{font-size:14.500px}
.search{height:34px;border:1px solid #757371;border-radius:3px;background:#a1a1a1;color:#5a5856;display:flex;align-items:center;gap:12px;padding-left:13px}
.search .i{margin-top:-4px;stroke-width:1.4;color:#4a4846}
.nav .search{gap:11px;padding-left:12px}
.tree{padding-top:11px}
.row{height:36.400px;display:grid;align-items:center;justify-items:center;grid-template-columns:40px 22px 6px 1fr 20px}
.row span{grid-column:4;justify-self:start}
.row .ic{grid-column:2}
.row .c{grid-column:1}
.row .p{grid-column:5;margin-right:1px;margin-top:-4px}
.r1{grid-template-columns:22px 40px 22px 6px 1fr 20px}
.r1 .c{grid-column:2}
.r1 .ic{grid-column:3}
.r1 span{grid-column:5}
.r1 .p{grid-column:6}
.r2{grid-template-columns:84px 22px 7px 128px;padding-bottom:2px}
.cut{width:131px;overflow:hidden;-webkit-mask-image:linear-gradient(90deg,#000 92%,transparent);mask-image:linear-gradient(90deg,#000 92%,transparent)}

/* workspace */
.work{flex:1;display:flex;flex-direction:column;min-width:0}
.tabs{height:44px;display:grid;grid-template-columns:124px 158px 146px 183px 178px 155px 166px 121px 265px 1fr;background:#9a9694;color:#4e4b49}
.tabs div{border-right:1px solid #8a8785;border-bottom:1px solid #8a8785;display:flex;align-items:center;gap:9px;padding:0 18px 7px 20px}
.tabs div:first-child{padding-left:19px}
.tabs span{flex:1}
.tabs .wide span{letter-spacing:-.1px}
.tabs div>.i:last-child{color:#1f1d1c;margin-top:4px}
.tabs .on{background:#9f9d9a;color:#151412;border-bottom-color:transparent;gap:11px}
.tabs .rest{border-right:0}
.subtabs{height:45px;border-bottom:1px solid #8c8a88;display:flex;color:#4e4b49;padding-left:20px;align-items:flex-start}
.subtabs span{height:43px;line-height:40px;width:98px;margin-right:29px;position:relative}
.subtabs small{font-size:13.500px;color:#636160}
.subtabs .on{color:#0f0e0d;border-bottom:3px solid #3f5030;margin-right:30px}
.subtabs span:nth-child(2){width:70px}
.subtabs span:nth-child(3){width:124px;letter-spacing:-.2px}
.subtabs span:nth-child(4){width:46px}
.subtabs span:nth-child(5){width:59px}
.subtabs span:nth-child(6){width:81px}
.subtabs span:nth-child(7){width:69px;margin-right:30px;letter-spacing:.1px}
.subtabs span:nth-child(8){width:38px;letter-spacing:-.1px}
.subtabs .sep::before{content:"";position:absolute;left:-15px;top:7px;height:25px;width:1px;background:#868482}
.designer{height:720px;display:flex;border-bottom:1px solid #777573}
.side{width:45px;background:#9a9694;display:flex;flex-direction:column;flex:none}
.side div{writing-mode:vertical-rl;transform:rotate(180deg);display:flex;align-items:center;justify-content:center;height:104px;color:#5a5856;border-left:1px solid #8c8a88;line-height:20px}
.side div:last-child{height:auto;flex:1;justify-content:flex-end;padding-bottom:21px}
.side .on{height:123px;background:#9f9d9a;color:#151412;border-left:0;box-shadow:0 -4px 8px -2px rgba(0,0,0,.16);letter-spacing:-.15px}
.palette{width:365px;padding:8px 0 0 15px;flex:none}
.pfilter{display:flex;align-items:center;gap:29px;padding-left:4px}
.pfilter .search{width:276px;padding-left:12px}
.palette h3{font-size:14.600px;display:flex;align-items:center;gap:15px;padding-left:6px;letter-spacing:-.2px;height:28px;margin-top:14px}
.palette ul{list-style:none;margin-top:5px}
.palette li{height:32.880px;display:flex;align-items:center;gap:11px;padding-left:1px}
.palette .h2{margin-top:7px}
.stage{width:735px;border-left:1px solid #8c8a88;display:flex;flex-direction:column;flex:none}
.stagebar{height:84px;flex:none;display:flex;padding:3px 10px 0 17px}
.tools{width:460px;display:flex;flex-wrap:wrap;align-content:flex-start;align-items:flex-start}
.s1{margin:9px 0 0 0}
.s2{margin:9px 0 0 40px}
.s3{margin:8px 0 0 23px}
.fit,.dim1{height:34px;border:1px solid #757371;border-radius:3px;display:flex;align-items:center;padding:0 16px;margin-left:18px;width:145px;justify-content:space-between}
.dim1{width:58px;margin-left:11px;padding:0 11px;background:#a1a1a1}
.s4{margin:12px 0 0 6px}
.d2{width:66px;margin-left:7px}
.modes{display:flex;height:34px;margin:21px 0 0 auto;border:1px solid #757371;border-radius:3px;line-height:32px;color:#4e4b49;background:#9a9896;text-align:center}
.modes span{width:66px;border-left:1px solid #757371}
.modes span:nth-child(2){width:81px}
.modes .on{background:#567a3f;color:#10150c;border:0;width:57px}
.zoomlv{display:flex;flex-basis:100%;align-items:center;gap:15px;margin:14px 0 0 12px;height:20px}
.canvas{flex:1;border:3px solid #567a3f;border-width:3px 2px;background:#928e8a;padding:14px 13px 10px;display:flex}
.page{width:695px;background:#9f9d9a;display:flex;flex-direction:column}
.pscroll{width:9px;background:#8a8884}
.phead{height:65px;background:#a1a1a1;border-bottom:1px solid #92918f;display:flex;justify-content:flex-end;padding:17px 28px 0 0}
.pbody{flex:1;padding:167px 15px 0}
.table{background:#a1a1a1}
.th{height:65px;border-bottom:1px solid #8f8e8c;padding:2px 0 0 457px;display:flex;align-items:center;gap:21px;color:#5a5856;font-size:14.400px}
.td{height:58px;line-height:60px;padding-left:457px;font-size:18.200px;letter-spacing:0}
.pfoot{height:75px;border-top:1px solid #92918f;background:#a1a1a1;text-align:center;color:#4a4846;padding-top:15px;font-size:16px;letter-spacing:0;line-height:25px}
.pfoot a{color:#1a4a5a;font-size:18.600px;margin-right:49px;display:block}
.props{width:379px;border-left:1px solid #8c8a88;padding:12px 18px 0 17px;flex:none}
.prhead{display:flex;justify-content:space-between;align-items:center;height:24px;padding-right:12px}
.prtabs{display:flex;gap:18px;height:51px;border-bottom:1px solid #8c8a88;margin-bottom:21px;padding-top:18px;color:#5a5856}
.prtabs .on{color:#151412;border-bottom:2px solid #3f5030}
.prlabel{color:#5a5856;height:28px;line-height:26px}
.cards{display:flex;gap:12px}
.cards div{width:85.500px;height:85px;border:1px solid #757371;background:#979593;display:flex;flex-direction:column;align-items:center;padding-top:12px;gap:12px}
.cards .on{background:#9f9d9a}
.right{width:43px}
.right div{transform:none}
.right .on{height:99px;padding-bottom:2px;box-shadow:0 4px 8px -2px rgba(0,0,0,.16);letter-spacing:-.34px}
.status{flex:0 0 43px;background:#9a9694;color:#4e4b49;display:grid;grid-template-columns:111px 147px 100px 104px 102px 1fr;padding-left:16px;align-items:center}
.status div{display:flex;align-items:center;gap:16px}
.status div:nth-child(6){gap:15px}
.status .i{color:#1f1d1c}

/* dialog */
.dialog{position:absolute;left:717px;top:437px;width:487px;height:306px;background:#fff;border-radius:5px;box-shadow:0 10px 40px rgba(0,0,0,.32),0 0 0 1px rgba(200,200,200,.3);overflow:hidden}
.dhead{height:81px;background:#f0eeed;display:flex;align-items:center;justify-content:space-between;padding:0 26px 2px 30px}
h2{font-size:25.500px;letter-spacing:-.7px}
.dhead .i{stroke-width:1.5}
.dbody{padding:26px 30px 0}
label{color:#77736f;display:block;height:27px;letter-spacing:-.4px}
em{font-style:normal;color:#4d7438;margin-left:4px}
.field{height:34px;border:1px solid #4f7439;border-radius:3px;padding-left:11px;display:flex;align-items:center;width:427px}
.field u{text-decoration:underline wavy #e8262b 1.2px;text-underline-offset:1px;text-decoration-skip-ink:none}
.caret{width:1px;height:19px;background:#000}
.btns{display:flex;justify-content:flex-end;gap:7px;margin-top:73px}
button{height:34px;width:77px;border:1px solid #b5b3b1;border-radius:3px;background:#fff;color:#151412;font:500 14.600px "Noto Sans",sans-serif;letter-spacing:-.3px;padding:0}
.pri{background:#312d2a;border-color:#312d2a;color:#fff;font-weight:600;width:76px}

/* taskbar */
.taskbar{flex:0 0 40px;background:#ebecee;display:flex;align-items:center;color:#000;font-family:"Open Sans",sans-serif;font-size:14.600px}
.tb{width:48px;height:40px;display:flex;align-items:center;justify-content:center;flex:none}
.tb:nth-child(2){width:50px}
.tb:nth-child(4){width:49px}
.tb:nth-child(5){width:54px}
.tb:nth-child(6){width:43px}
.tb:nth-child(7){width:52px}
.tb:nth-child(8){width:46px}
.tb:nth-child(9),.tb:nth-child(11){width:48px}
.adobe{width:20px;height:20px;border-radius:3px;font:700 12px/19px "Open Sans",sans-serif;text-align:center;letter-spacing:-.5px}
.xd{background:#470137;color:#ff61f6}
.pr{background:#00005b;color:#9f9bff}
.act{background:#f8f8f9;border-bottom:3px solid #29a8c8;padding-top:3px}
.run{background:linear-gradient(#29a8c8,#29a8c8) 50% 100%/37px 3px no-repeat}
.tray{margin-left:auto;display:flex;align-items:center;border-right:1px solid #bbb;margin-right:4px;height:40px;padding-right:28px}
.temp{font-size:17.700px;letter-spacing:0;width:39px;margin:4px 13px 0 12px}
.cond{font-size:17.500px;letter-spacing:0;width:48px;margin:4px 12px 0 0}
.tray .i{margin-right:11px}
.tray .bat{margin-right:13px}
.tray .vol{margin-right:16px}
.lang{width:30px;letter-spacing:-.2px;margin:0 19px 0 10px}
.clock{width:64px;letter-spacing:0;margin-right:28px}
.tray .note{margin:0}
```
